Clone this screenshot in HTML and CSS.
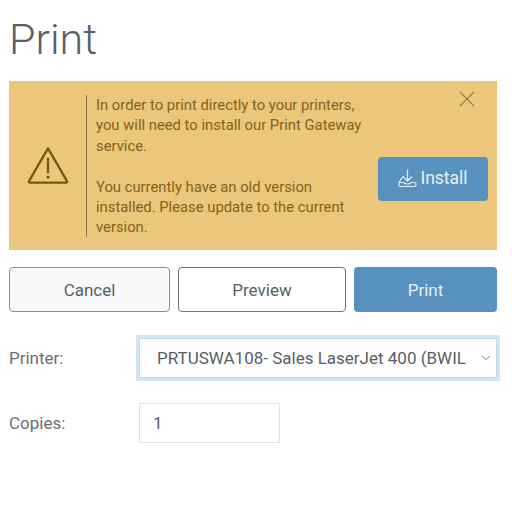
FILE: index.html
```html
<!DOCTYPE html>
<html lang="en">
<head>
    <meta charset="UTF-8">
    <meta name="viewport" content="width=device-width, initial-scale=1.0">
    <title>Print</title>
    <link rel="stylesheet" href="styles.css">
</head>
<body>
    <h1 class="title">Print</h1>

    <div class="alert">
        <div class="alert-icon">
            <svg width="44" height="39" viewBox="0 0 44 40" fill="none" stroke="#7a5510" stroke-width="2.4" stroke-linejoin="round" stroke-linecap="round">
                <path d="M22 2.5 L41.5 36 Q42 37.5 40.5 37.5 L3.500 37.5 Q2 37.500 2.500 36 Z"/>
                <path d="M22 13 V27"/>
                <circle cx="22" cy="32" r="1.2" fill="#7a5510" stroke-width="1"/>
            </svg>
        </div>
        <div class="alert-text">
            <p>In order to print directly to your printers, you will need to install our Print Gateway service.</p>
            <p>You currently have an old version installed. Please update to the current version.</p>
        </div>
        <div class="alert-side">
            <button class="close-btn" aria-label="Close">
                <svg width="16" height="16" viewBox="0 0 18 18" stroke="#8f7440" stroke-width="1.2" fill="none">
                    <path d="M1 1 L17 17 M17 1 L1 17"/>
                </svg>
            </button>
            <button class="install-btn">
                <svg width="19" height="19" viewBox="0 0 19 19" fill="none" stroke="#e4eef6" stroke-width="1.2" stroke-linecap="round" stroke-linejoin="round">
                    <path d="M9.500 1 V12 M5.500 8 L9.500 12 L13.500 8"/>
                    <path d="M5.500 8 H4.500 L1 13.500 V16 Q1 17.500 2.500 17.500 H16.500 Q18 17.500 18 16 V15 Q18 13.500 16.500 13.500 H13 Q12.500 15 9.500 15 Q6.500 15 6 13.500 H1"/>
                </svg>
                Install
            </button>
        </div>
    </div>

    <div class="actions">
        <button class="btn btn-cancel">Cancel</button>
        <button class="btn btn-preview">Preview</button>
        <button class="btn btn-print">Print</button>
    </div>

    <div class="form-row printer-row">
        <label class="form-label">Printer:</label>
        <div class="select-box">
            <span class="select-value">PRTUSWA108- Sales LaserJet 400 (BWIL</span>
            <svg width="10" height="6" viewBox="0 0 12 7" fill="none" stroke="#666" stroke-width="1.1">
                <path d="M1.500 1 L6 5.500 L10.500 1"/>
            </svg>
        </div>
    </div>

    <div class="form-row copies-row">
        <label class="form-label">Copies:</label>
        <div class="copies-box">1</div>
    </div>
</body>
</html>
```

FILE: styles.css
```css
body {
    margin: 0;
    padding: 0 15px 0 9px;
    background-color: #ffffff;
    font-family: Roboto, "Liberation Sans", sans-serif;
    color: #555a5e;
}

.title {
    margin: 0;
    padding-top: 12px;
    height: 81px;
    box-sizing: border-box;
    font-size: 43px;
    line-height: 54px;
    font-weight: 300;
    color: #5a5f64;
}

.alert {
    display: flex;
    height: 169px;
    background-color: #ecc67a;
}

.alert-icon {
    width: 77px;
    flex: none;
    display: flex;
    align-items: center;
    justify-content: center;
    box-sizing: border-box;
}

.alert-text {
    width: 283px;
    flex: none;
    box-sizing: border-box;
    margin: 14px 0 13px;
    padding: 0 0 0 9px;
    border-left: 1px solid #8a7345;
    font-size: 14.8px;
    line-height: 20.400px;
    color: #85621e;
}

.alert-text p {
    margin: 0 2px 20.400px 0;
}

.alert-side {
    flex: 1;
    display: flex;
    flex-direction: column;
    align-items: flex-end;
    padding: 10px 9px 0 0;
}

.close-btn {
    padding: 0;
    margin-right: 13px;
    border: none;
    background: none;
    line-height: 0;
}

.install-btn {
    display: flex;
    align-items: center;
    justify-content: center;
    gap: 3px;
    width: 110px;
    height: 44px;
    margin-top: 50px;
    padding: 0 0 2px;
    border: none;
    border-radius: 4px;
    background-color: #5791bd;
    color: #e8f0f6;
    font-family: inherit;
    font-size: 17.500px;
}

.actions {
    display: flex;
    gap: 8px;
    margin-top: 17px;
}

.btn {
    height: 45px;
    box-sizing: border-box;
    border-radius: 4px;
    font-family: inherit;
    font-size: 17px;
    color: #5a5f63;
}

.btn-cancel {
    width: 161px;
    border: 1px solid #8c8f92;
    background-color: #f7f8fa;
}

.btn-preview {
    width: 168px;
    border: 1px solid #6f7275;
    background-color: #ffffff;
}

.btn-print {
    width: 143px;
    border: none;
    background-color: #5791bd;
    color: #e8f0f6;
}

.form-row {
    display: flex;
    align-items: center;
}

.form-label {
    width: 130px;
    flex: none;
    font-size: 17px;
    color: #6a6e72;
}

.printer-row {
    margin-top: 26px;
    height: 40px;
}

.select-box {
    width: 358px;
    height: 40px;
    flex: none;
    box-sizing: border-box;
    display: flex;
    align-items: center;
    justify-content: space-between;
    padding: 0 5px 0 17px;
    border: 1px solid #bcdcf0;
    box-shadow: 0 0 0 3px #d3e6f4;
    font-size: 17px;
    color: #5a5e62;
}

.copies-row {
    margin-top: 25px;
    height: 40px;
}

.copies-box {
    width: 141px;
    height: 40px;
    flex: none;
    box-sizing: border-box;
    padding-left: 13px;
    border: 1px solid #e2e3e4;
    font-size: 17px;
    line-height: 38px;
    color: #5a5e62;
}
```
